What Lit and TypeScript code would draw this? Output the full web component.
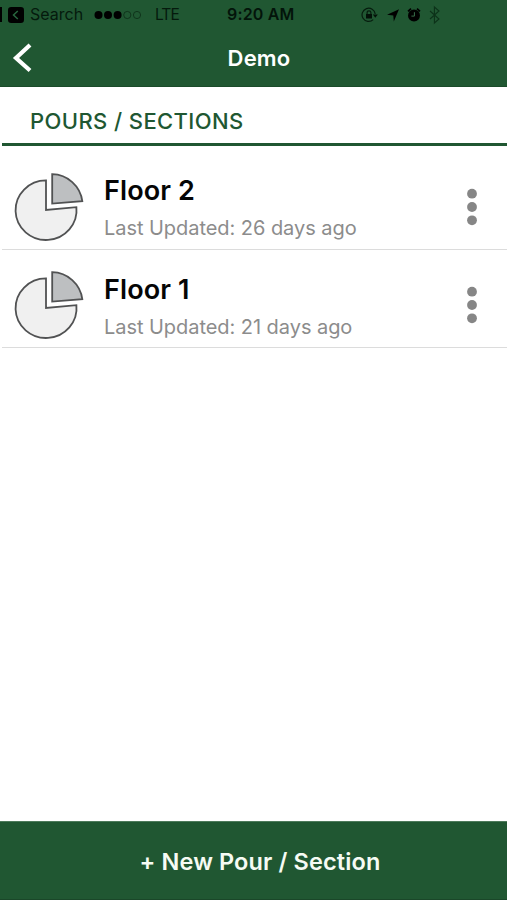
import { LitElement, html, css } from "lit";
import { customElement, property } from "lit/decorators.js";

@customElement("status-bar")
class StatusBar extends LitElement {
  static styles = css`
    :host { display: flex; height: 29px; align-items: center; color: #051a0d; position: relative; font-size: 16px; line-height: 29px; }
    .edge { width: 2px; height: 15px; background: #000; margin-right: 6px; }
    .search { margin-left: 6px; width: 64px; letter-spacing: 0; }
    .carrier { margin-left: 13px; font-size: 15.5px; letter-spacing: -0.9px; width: 72px; }
    .time { font-weight: 600; letter-spacing: 0.15px; width: 134px; color: #03140a; }
    svg { display: block; flex: none; }
  `;
  render() {
    return html`
      <span class="edge"></span>
      <svg width="16" height="16" viewBox="0 0 16 16"><rect width="16" height="16" rx="3.2" fill="#000" /><path d="M9.8 4L5.5 8l4.3 4" fill="none" stroke="#28673e" stroke-width="1.5" /></svg>
      <span class="search">Search</span>
      <svg width="48" height="10" viewBox="0 0 48 10">
        <circle cx="4.5" cy="5" r="4" /><circle cx="14" cy="5" r="4" /><circle cx="23.6" cy="5" r="4" />
        <g fill="none" stroke="#0d3019" stroke-width=".9"><circle cx="33.3" cy="5" r="3.6" /><circle cx="43" cy="5" r="3.6" /></g>
      </svg>
      <span class="carrier">LTE</span>
      <span class="time">9:20 AM</span>
      <svg width="82" height="20" viewBox="0 0 82 20">
        <g fill="none" stroke="#061d0e" stroke-width="1.2">
          <path d="M12.2 14.6A6.6 6.6 0 1 1 14.2 9" />
          <path d="M6.1 9.3V7.8a1.9 1.9 0 0 1 3.8 0v1.5" />
        </g>
        <path d="M5 9h6v4.6H5zM11.8 9.5h5l-2.5 3.2z" fill="#031108" />
        <path d="M38 4.2L26 9.8l6.3.6.5 6.2z" fill="#000" />
        <circle cx="53" cy="10.4" r="6" fill="#000" />
        <path d="M47 6.4l3-2.7M59 6.4l-3-2.7" stroke="#000" stroke-width="1.7" />
        <path d="M53.4 7.2v3.9h-3" fill="none" stroke="#39704b" stroke-width="1" />
        <path d="M69 6l9 8-4.6 4V2L78 6l-9 8" fill="none" stroke="#0c3219" stroke-width="1.1" />
      </svg>
    `;
  }
}

@customElement("section-row")
class SectionRow extends LitElement {
  @property() name = "";
  @property() age = "";
  static styles = css`
    :host { display: flex; height: 98.6px; box-sizing: border-box; border-bottom: 1.4px solid #dcdcdc; margin-left: 2px; }
    .pie { flex: none; margin: 18.5px 0 0 9px; }
    .text { margin-left: 13px; flex: 1; padding-top: 21px; white-space: nowrap; }
    .name { font-size: 27px; font-weight: 600; line-height: 38px; letter-spacing: 0.1px; color: #050505; }
    .age { font-size: 20px; line-height: 37px; color: #8c8c8c; letter-spacing: -0.05px; }
    .more { flex: none; margin: 35.5px 29.5px 0 0; }
  `;
  render() {
    return html`
      <svg class="pie" width="80" height="76" viewBox="0 0 80 76" stroke="#515253" stroke-width="1.8" stroke-linejoin="miter">
        <path d="M35 10.4A30.5 29.8 0 1 0 65.4 37.2L35 40Z" fill="#f0f0f0" />
        <path d="M41.2 4.2A31 31 0 0 1 71.3 31.2L41.2 33.6Z" fill="#bdbfc1" />
      </svg>
      <div class="text">
        <div class="name">${this.name}</div>
        <div class="age">Last Updated: ${this.age}</div>
      </div>
      <svg class="more" width="12" height="40" viewBox="0 0 12 40" fill="#868686">
        <circle cx="6" cy="6.7" r="4.9" /><circle cx="6" cy="20" r="4.9" /><circle cx="6" cy="33.3" r="4.9" />
      </svg>
    `;
  }
}

@customElement("app-root")
class AppRoot extends LitElement {
  static styles = css`
    :host { display: flex; flex-direction: column; height: 900px; background: #fff; overflow: hidden; font-family: Inter, "Liberation Sans", sans-serif; }
    header { height: 87px; box-sizing: border-box; background: #205732; border-bottom: 1px solid #1b4b2a; flex: none; }
    .nav { display: grid; grid-template-columns: 60px 1fr 60px; height: 57px; align-items: center; }
    .back { display: block; margin-left: 12px; }
    .title { color: #fff; text-align: center; font-size: 22px; font-weight: 600; letter-spacing: 0.2px; padding-left: 11px; }
    h2 { flex: none; margin: 0 0 0 2px; height: 59px; box-sizing: border-box; border-bottom: 3px solid #205732; padding: 6px 0 0 28px; font-size: 22px; font-weight: 550; line-height: 56px; letter-spacing: 0.4px; color: #205732; white-space: nowrap; }
    main { flex: 1; padding-top: 5px; }
    footer { flex: none; height: 79px; background: #205732; border-top: 1px solid #4d7a5b; border-bottom: 1px solid #1a4729; box-sizing: border-box; display: flex; align-items: center; justify-content: center; color: #f6fbf4; font-size: 23.5px; font-weight: 600; letter-spacing: 0.12px; padding: 2px 0 0 13px; white-space: nowrap; }
  `;
  render() {
    return html`
      <header>
        <status-bar></status-bar>
        <div class="nav">
          <svg class="back" width="22" height="32" viewBox="0 0 22 32"><path d="M18 3L4 16l14 12.5" fill="none" stroke="#fff" stroke-width="4.2" /></svg>
          <div class="title">Demo</div>
        </div>
      </header>
      <h2>POURS / SECTIONS</h2>
      <main>
        <section-row name="Floor 2" age="26 days ago"></section-row>
        <section-row name="Floor 1" age="21 days ago"></section-row>
      </main>
      <footer>+ New Pour / Section</footer>
    `;
  }
}
